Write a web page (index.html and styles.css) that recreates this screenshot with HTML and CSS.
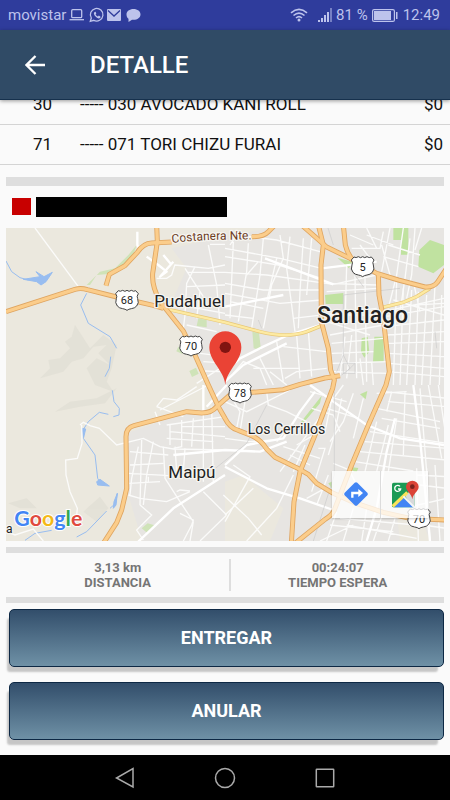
FILE: index.html
```html
<!DOCTYPE html>
<html lang="es">
<head>
<meta charset="utf-8">
<meta name="viewport" content="width=device-width, initial-scale=1">
<title>Detalle</title>
<link rel="stylesheet" href="styles.css">
</head>
<body>
<div class="status">
  <span class="status-name">movistar</span>
  <svg class="status-left" viewBox="0 0 72 16" width="72" height="16" aria-hidden="true">
    <g fill="none" stroke="currentColor" stroke-width="1.3">
      <rect x="2.7" y="2.7" width="10" height="8" rx="1"/>
      <path d="M0.5 12.7h14.5"/>
      <path d="M21.3 14.3l1-3.3a6.3 6.3 0 1 1 2.5 2.3z"/>
    </g>
    <path fill="currentColor" d="M25.300 5.200c.4-.6 1.200-.7 1.500 0l.5 1.200-.7 1c.5 1 1.300 1.700 2.300 2.200l.9-1 1.500.8c.4.3.2 1.200-.3 1.600-1.200 1-3.300 0-4.700-1.700-1.300-1.600-1.900-3-1-4.100z"/>
    <rect x="38" y="2" width="14" height="12" rx="1" fill="currentColor"/>
    <path d="M39 3.500l6 5.500 6-5.500" fill="none" stroke="#2f3c9c" stroke-width="1.300"/>
    <path fill="currentColor" d="M64.500 2c4 0 7 2.300 7 5.400s-3 5.400-7 5.400l-1.500-.1L59.500 15v-3.300c-1.300-1-2-2.500-2-4.300 0-3.100 3-5.400 7-5.400z"/>
  </svg>
  <span class="spacer"></span>
  <svg class="status-wifi" viewBox="0 0 18 14" width="18" height="14" aria-hidden="true">
    <g fill="none" stroke="currentColor" stroke-width="1.600">
      <path d="M1 4.800q8-7 16 0M3.500 7.500q5.500-4.800 11 0M6 10q3-2.600 6 0"/>
    </g>
    <circle cx="9" cy="12" r="1.500" fill="currentColor"/>
  </svg>
  <svg class="status-signal" viewBox="0 0 15 14" width="15" height="14" aria-hidden="true">
    <path fill="currentColor" d="M0 12h2v2H0zM3 10h2v4H3zM6 7h2v7H6zM9 4h2v10H9z"/>
    <path fill="currentColor" opacity=".5" d="M12 0h2v14h-2z"/>
  </svg>
  <span class="status-battery">81 %</span>
  <svg class="status-cell" viewBox="0 0 26 13" width="26" height="13" aria-hidden="true">
    <rect x=".6" y=".6" width="21.800" height="11.800" rx="1.500" fill="none" stroke="currentColor" stroke-width="1.200"/>
    <path fill="currentColor" d="M2 2h17v9H2zM24 3h1.500v7H24z"/>
  </svg>
  <span class="status-time">12:49</span>
</div>

<header class="bar">
  <button class="back" type="button" aria-label="Volver">
    <svg viewBox="0 0 20 20" width="20" height="20" aria-hidden="true"><path d="M20 10H1.800M10.500 1L1.500 10l9 9" fill="none" stroke="#fff" stroke-width="2.300"/></svg>
  </button>
  <h1 class="title">DETALLE</h1>
</header>

<main class="content">
  <table class="items">
    <tbody>
      <tr><td class="code">30</td><td>----- 030 AVOCADO KANI ROLL</td><td class="price">$0</td></tr>
      <tr><td class="code">71</td><td>----- 071 TORI CHIZU FURAI</td><td class="price">$0</td></tr>
    </tbody>
  </table>

  <div class="detail">
    <div class="rule rule-thick"></div>
    <div class="address"><span class="marker"></span><span class="redacted"></span></div>

    <div class="map">
      <svg class="map-canvas" viewBox="18 9 1314 939" role="img" aria-label="Mapa">
        <defs>
          <path id="costanera" d="M516 54Q600 44 675 44T770 42"/>
          <path id="shield" d="M-26-28q6 4 13-1 7 6 13 0 6 6 13 0 7 5 13 1l8 9q-6 8-2 15 5 13-3 22-6 7-16 8-8 1-13 5-5-4-13-5-10-1-16-8-8-9-3-22 4-7-2-15z"/>
          <path id="h1" d="M18 260L225 193Q243 188 262 194L350 216 460 241 490 250"/>
          <path id="h2" d="M470 0L472 50 458 145Q455 185 480 228L500 255 550 318 585 390 625 480 655 545 675 580Q690 610 715 616L750 630Q782 643 800 672L825 697 890 728 925 748 950 775 1000 805 1060 832 1150 862 1230 880 1340 885"/>
          <path id="h3" d="M318 182L328 148 375 122 412 82Q430 55 455 54L515 51"/>
          <path id="h4" d="M755 35Q790 36 805 20L825 0"/>
          <path id="h5" d="M310 955L350 893 365 855 380 790 378 635Q378 608 402 602L560 560 605 564Q635 564 650 545L690 510 755 502 850 494 900 478 975 459 1020 452"/>
          <path id="h6" d="M905 0L945 35 980 66 1050 100 1130 145 1195 165 1275 186Q1300 188 1312 172L1340 130"/>
          <path id="h7" d="M955 0L970 60 963 120 964 290 985 370 992 435 1003 465 998 490 945 630 900 740 882 830 874 955"/>
          <path id="h8" d="M1030 0L1036 60Q1044 92 1062 108M1135 145L1137 210 1150 280 1160 370 1168 440 1158 480 1105 600 1055 720 1005 850Q1000 868 975 883L885 955"/>
        </defs>

        <rect class="land" width="1340" height="960"/>
        <path class="city" d="M515 70L675 35 860 0H1340V960H430L385 810 380 625 540 570 640 550 590 385 505 255 560 130z"/>
        <path class="land" d="M675 770L730 750 850 850 810 948H675zM1190 865L1260 870 1290 948H1200z"/>
        <g class="relief">
          <path d="M225 300L215 335 195 350 210 370 180 400 145 405 150 430 120 460 190 440 215 410 250 400 280 365 320 360 295 385 330 420 290 400 260 430 285 480 340 500 320 470 335 430 350 360 310 330 270 370z"/>
          <path d="M165 560L210 530 290 520 350 490 315 535 240 545zM25 835L80 820 110 850 60 850zM250 860L300 815 325 850 290 890z"/>
        </g>
        <g class="park">
          <path d="M300 140L345 130 385 90 410 60 400 90 350 145 290 150 270 180 260 180zM595 280l25 5v22l-30-4zM568 438l20-10 8 18-20 10zM535 365l18 8-6 14-18-8zM425 910l18-15 20 6-22 22zM757 320l20 4 6 50-22-4z"/>
        </g>
        <g class="park-bright">
          <path d="M1180 9h45v80h-22V45h-23zM1258 75L1290 45 1332 60V120L1300 145 1255 125zM975 210l55-6v33h-53zM1123 335h28v75h-32zM1012 98l45 12-10 20zM1085 340l18-5 5 45-15 18-10-18zM900 595L965 512 960 535 905 600zM1080 508l22-10-5 25zM1045 725l30 4-5 12-25-4zM985 775l10-5v20z"/>
        </g>
        <g class="water">
          <path d="M18 108L35 140 60 158 85 165M260 205L242 240 265 295 330 335 350 370M332 395L328 430 315 455M337 496L342 530 358 550 357 570 340 575M325 568L298 562 265 590 249 615 250 640 285 690 293 760 300 772M352 805L347 835 330 850M320 858L260 920 230 936M75 946L105 925 155 916"/>
          <path class="water-fill" d="M70 163L120 155 108 140 132 155 157 142 138 170 123 180 110 170zM290 770l10-7 28 20-35-3zM352 805l-4 35-8 10 2-20zM247 610l10 2-6 25z"/>
        </g>

        <g class="street">
          <path d="M105 9L235 185M18 920L45 930 100 912 115 930 130 948M240 600L250 592 270 602 298 610 350 660 430 640 480 665 520 672 675 675M245 600L246 655 232 700 197 705 198 750 210 800 232 850 230 870"/>
          <path d="M525 118L515 150 500 160 470 160M525 120L625 130 675 120M585 125L560 175 555 270 550 310M625 60L650 180 660 300M675 58H630M565 142H675M560 185L675 180M540 240L675 265M600 200L590 280M600 385L680 395M610 410L690 415M615 438L660 440M590 475L660 430M640 350L670 355M560 300L650 320M555 130L610 215"/>
          <path d="M470 545L490 520 530 525 590 485M465 560L480 600M470 545L550 575M480 555L625 480M500 600L675 575M510 600V660M545 585V665L520 670M580 580L575 665M610 560V770M635 545L640 770M675 605H545M510 620L675 635M500 640L640 650M425 645L420 840M460 650L440 750 430 840M390 720L490 715M385 745L510 752M388 775L480 770M385 810L420 820 500 830 570 800M490 665L495 760 540 830 580 890 570 948M415 665L395 760 390 810M390 680L505 690M525 665L530 740M555 670L550 740M420 840L455 870 410 915 430 945M610 800L680 870M540 865L580 885 575 900 550 948M600 948L680 870M445 755V770M530 800L540 795 570 798"/>
          <path d="M675 70L840 100 965 130M690 60L710 30 830 45 960 80M675 95L835 120 965 160M675 142L800 150 1000 178 1130 150M675 175L790 195 960 195M675 205L840 235 965 225M700 50L690 280M745 55L740 140 715 290M790 40L780 150 755 310M840 30L850 100 815 180 790 310M870 35L860 130 875 240 885 320M910 40L900 200 895 310M935 40L920 210M675 270L760 280M775 110L740 150M880 280L1130 250M690 230L790 250M830 100L800 230"/>
          <path d="M980 175L1130 180M980 200L1130 190M965 270H1130M1040 120L1035 300M1065 150L1070 460M1095 160L1100 470M1170 9L1145 140M1210 9L1190 150 1165 250M1230 40L1215 160 1200 260M1245 9L1235 150 1220 220M1165 60L1260 90M1150 95L1255 125M1100 30L1180 60M1080 60L1110 100M1050 30L1120 60M1055 70L1140 70 1150 20M1265 9L1245 75M1145 60L1170 150M1100 9L1130 70"/>
          <path d="M1190 170L1180 480M1210 190L1200 480M1235 195L1220 480M1255 200L1245 480M1280 210L1265 480M1305 180L1290 480M1325 210L1318 480M1155 275L1332 245M1155 305L1332 285M1160 330L1332 320M1160 355L1332 350M1165 385L1332 395M1168 415L1332 430M1165 440L1332 455M1150 260L1332 220M1180 225L1332 270M1240 240L1332 235M1240 170L1260 260"/>
          <path d="M990 330L1150 300M995 355L1150 340M995 385L1120 380M995 415L1165 410M1000 440L1165 445M1035 335L1020 450M1055 330L1040 460M1080 400L1090 480M1115 410L1120 480M980 290L1110 330M830 350L850 470M890 330L900 460M925 315L935 455M850 365L980 380M810 440L860 480M780 400L820 480M760 430L900 430M700 445L730 410 780 430 800 480M855 460L890 440 980 430"/>
          <path d="M675 530L740 560 800 530 870 495M690 510L720 560 710 610M800 500L805 540 860 560 920 590M740 500L720 620M675 640L750 650 820 645M830 650L870 600M850 665L960 700M870 690L930 720M890 660L960 620M955 670L975 670 935 800M915 660L880 740M935 550L1000 570 1020 620M1000 500L975 620M1025 520L1000 640 985 690M1060 505L1030 590 990 650M1090 520L1060 640M930 500L1040 530M980 550L1075 580"/>
          <path d="M1130 550L1320 590M1145 580L1320 610M1155 500L1340 520M1165 530L1340 545M1130 505L1220 500M1110 620L1340 655M1095 650L1340 670M1080 680L1340 705M1065 710L1240 738M1130 590L1095 740M1165 600L1130 740M1190 580L1165 740M1150 500L1120 580M1175 500L1160 560M1215 500L1210 690M1285 480L1325 700M1315 480L1340 650M1260 490L1280 740M1000 715L1060 740M1210 850L1340 820M1250 730L1255 948M1280 730L1290 948M1305 720L1320 948M1250 750L1340 755M1260 780L1340 790M1270 900L1340 910M1050 740L1090 820M1150 860L1120 948M1185 880L1165 948M1100 850L1085 948M1060 850L1030 948M1040 900L1250 940M990 900L1180 920M1020 880L1250 900M960 948L1060 900"/>
          <path d="M675 870L760 790M840 740L1030 480M700 720L750 755 675 890M880 750L830 850 740 948M1010 860L980 948M975 790L920 820M985 750L950 840M670 810L745 880 785 930"/>
        </g>
        <g class="avenue">
          <path d="M412 20V60L420 80M440 95L475 120 500 140 480 155 520 110M490 90L515 120M675 440L720 400 790 365 865 330 960 300M675 470L730 420 860 355M620 545L680 480M610 480V560M415 950L520 850 675 750M520 690L675 675M675 720L740 660 850 640 900 560 945 500M675 675L780 680 860 650M675 725L800 790 900 820 1000 855M930 480L1000 530 1100 600 1200 640 1332 660M1240 480L1260 640 1290 948M1185 580L1160 680 1130 850 1100 948M965 130L1130 110M795 100L1000 178M675 245L850 210"/>
        </g>
        <g class="rail">
          <path d="M1030 210V390L1010 440M1030 210L1200 190M1025 450L1050 430 1030 390M1003 500V750L940 948M640 735L740 655 800 540M984 9L1000 60M1050 130L1090 185M1305 320L1310 370M775 285L785 310M1030 415h35v30h-35zM1035 445L1065 415"/>
        </g>

        <path class="trunk-case" d="M490 250L675 292 780 320Q860 340 920 320L970 300M1145 248L1210 232 1250 215 1290 190"/>
        <path class="trunk" d="M490 250L675 292 780 320Q860 340 920 320L970 300M1145 248L1210 232 1250 215 1290 190"/>
        <g class="highway-case"><use href="#h1"/><use href="#h2"/><use href="#h3"/><use href="#h4"/><use href="#h5"/><use href="#h6"/><use href="#h7"/><use href="#h8"/></g>
        <g class="highway"><use href="#h1"/><use href="#h2"/><use href="#h3"/><use href="#h4"/><use href="#h5"/><use href="#h6"/><use href="#h7"/><use href="#h8"/></g>

        <g class="shield">
          <use href="#shield" x="381" y="225"/><use href="#shield" x="573" y="362"/><use href="#shield" x="1088" y="124"/><use href="#shield" x="720" y="503"/><use href="#shield" x="1257" y="880"/>
        </g>
        <g class="shield-label">
          <text x="381" y="238">68</text><text x="573" y="375">70</text><text x="1088" y="137">5</text><text x="720" y="516">78</text><text x="1257" y="893">70</text>
        </g>
        <g class="place">
          <text class="place-road"><textPath href="#costanera">Costanera Nte.</textPath></text>
          <text class="place-town" x="463" y="245">Pudahuel</text>
          <text class="place-town" x="505" y="760">Maipú</text>
          <text class="place-suburb" x="743" y="627">Los Cerrillos</text>
          <text class="place-city" x="951" y="294">Santiago</text>
          <text class="place-road" x="18" y="925">a</text>
        </g>
        <path fill="#ea4335" d="M676 480C672 435 628 410 628 367a48 48 0 0 1 96 0C724 410 680 435 676 480z"/>
        <circle cx="676" cy="367" r="17" fill="#811411"/>
        <text class="logo" x="43" y="902"><tspan class="blue">G</tspan><tspan class="red">o</tspan><tspan class="yellow">o</tspan><tspan class="blue">g</tspan><tspan class="green">l</tspan><tspan class="red">e</tspan></text>
      </svg>
      <div class="map-tools">
        <button type="button" class="tool" aria-label="Cómo llegar">
          <svg viewBox="0 0 72 72" width="24" height="24" aria-hidden="true"><path fill="#4285f4" d="M32 2q4-3 8 0l30 30q3 4 0 8L40 70q-4 3-8 0L2 40q-3-4 0-8z"/><path d="M25 47V33h24" fill="none" stroke="#fff" stroke-width="7"/><path fill="#fff" d="M43 21l14 12-14 12z"/></svg>
        </button>
        <button type="button" class="tool" aria-label="Abrir en Google Maps">
          <svg viewBox="0 0 84 84" width="28" height="28" aria-hidden="true">
            <rect x="3" y="8" width="67" height="74" rx="5" fill="#1c9a55"/>
            <path fill="#d7d9db" d="M40 44L70 28V78L64 82z"/>
            <path fill="#4285f4" d="M8 82L38 50 68 82z"/>
            <path d="M5 79L49 37" stroke="#fbe35a" stroke-width="10"/>
            <path d="M37 49L69 81" stroke="#f5f5f5" stroke-width="6"/>
            <path d="M27 19a9 9 0 1 0 2 8h-8" fill="none" stroke="#fff" stroke-width="4"/>
            <path fill="#db4437" d="M64 58C62 40 45 34 45 20a19 18 0 0 1 38 0C83 34 66 40 64 58z"/>
            <circle cx="64" cy="20" r="7" fill="#7b231e"/>
          </svg>
        </button>
      </div>
    </div>

    <div class="rule"></div>
    <dl class="stats">
      <div class="stat"><dd>3,13 km</dd><dt>DISTANCIA</dt></div>
      <div class="stat"><dd>00:24:07</dd><dt>TIEMPO ESPERA</dt></div>
    </dl>
    <div class="rule"></div>

    <div class="actions">
      <button type="button" class="action">ENTREGAR</button>
      <button type="button" class="action">ANULAR</button>
    </div>
  </div>
</main>

<nav class="nav">
  <button type="button" class="nav-key" aria-label="Atrás"><svg viewBox="0 0 24 24" width="24" height="24" aria-hidden="true"><path d="M20 2.500v18.500L3.500 12z"/></svg></button>
  <button type="button" class="nav-key" aria-label="Inicio"><svg viewBox="0 0 24 24" width="24" height="24" aria-hidden="true"><circle cx="12" cy="12" r="9.500"/></svg></button>
  <button type="button" class="nav-key" aria-label="Recientes"><svg viewBox="0 0 24 24" width="24" height="24" aria-hidden="true"><rect x="3.300" y="3.300" width="17.400" height="17.400" rx=".5"/></svg></button>
</nav>
</body>
</html>
```
FILE: styles.css
```css
* { box-sizing: border-box; }

body {
  margin: 0;
  min-height: 100vh;
  display: flex;
  flex-direction: column;
  background: #fafafa;
  color: #111;
  font-family: Roboto, "Liberation Sans", sans-serif;
}

button {
  font: inherit;
  border: 0;
  padding: 0;
  background: none;
}

svg { display: block; }

.status {
  position: relative;
  z-index: 2;
  display: flex;
  align-items: center;
  height: 30px;
  padding: 0 10px 0 8px;
  background: #2f3c9c;
  color: #bdc3ec;
  font-size: 15px;
}
.status-left { margin-left: 3px; }
.spacer { flex: 1; }
.status-wifi { margin-right: 10px; }
.status-signal { margin-right: 3px; }
.status-battery { margin-right: 4px; }
.status-cell { margin-right: 5px; }

.bar {
  position: relative;
  z-index: 2;
  display: flex;
  align-items: center;
  gap: 45px;
  height: 70px;
  padding: 0 25px;
  background: #304b66;
  border-bottom: 1px solid #16314d;
  box-shadow: 0 1px 4px rgba(0, 0, 0, .4);
}
.title {
  margin: 0;
  color: #fff;
  font-size: 24px;
  font-weight: 500;
}

.content { flex: 1; }

.items {
  width: 100%;
  margin-top: -16px;
  border-collapse: collapse;
  font-size: 17px;
}
.items td {
  height: 40px;
  padding: 0;
  border-bottom: 1px solid #d4d4d4;
}
.items .code { width: 80px; padding-left: 33px; }
.items .price { padding-right: 7px; text-align: right; }

.detail { padding: 12px 6px 15px; }

.rule { height: 6px; background: #dedede; }
.rule-thick { height: 9px; }

.address {
  display: flex;
  align-items: center;
  gap: 5px;
  padding: 11px 6px;
}
.marker { width: 19px; height: 17px; background: #c80000; }
.redacted { width: 191px; height: 20px; background: #000; }

.map { position: relative; margin-bottom: 6px; }
.map-canvas { width: 100%; height: auto; }
.map-tools {
  position: absolute;
  right: 16px;
  bottom: 23px;
  display: flex;
  background: rgba(255, 255, 255, .76);
  box-shadow: 0 1px 2px rgba(0, 0, 0, .2);
}
.tool {
  display: grid;
  place-items: center;
  width: 48px;
  height: 47px;
}
.tool + .tool { border-left: 1px solid #dcdcdc; }

.land { fill: #ebe8de; }
.city { fill: #e7e5e2; }
.relief { fill: #dfddd3; opacity: .6; }
.park { fill: #cfe3b8; }
.park-bright { fill: #c0e2a0; }
.water { fill: none; stroke: #98bdf0; stroke-width: 3; }
.water-fill { fill: #98bdf0; }
.street { fill: none; stroke: #fbfbfa; stroke-width: 4; }
.avenue { fill: none; stroke: #fff; stroke-width: 7; stroke-linejoin: round; }
.rail { fill: none; stroke: #cbcbcb; stroke-width: 2; }
.trunk-case { fill: none; stroke: #e7c777; stroke-width: 11; }
.trunk { fill: none; stroke: #fdeaa2; stroke-width: 7; }
.highway-case { fill: none; stroke: #dfa561; stroke-width: 15; stroke-linejoin: round; }
.highway { fill: none; stroke: #fbcd8b; stroke-width: 10; stroke-linejoin: round; }

.shield { fill: #fff; stroke: #444; stroke-width: 3; }
.shield-label { fill: #222; font-size: 33px; text-anchor: middle; }
.place {
  fill: #222;
  stroke: #f5f4f0;
  stroke-width: 8;
  stroke-linejoin: round;
  paint-order: stroke;
}
.place-city { font-size: 69px; font-weight: 500; }
.place-town { font-size: 51px; }
.place-suburb { font-size: 42px; }
.place-road { font-size: 36px; }
textPath { fill: #6b3a1c; }

.logo {
  font-family: Lato, Roboto, sans-serif;
  font-size: 64px;
  font-weight: 700;
  stroke: #fff;
  stroke-width: 6;
  paint-order: stroke;
}
.blue { fill: #4285f4; }
.red { fill: #e04a3f; }
.yellow { fill: #f4b919; }
.green { fill: #34a853; }

.stats {
  display: grid;
  grid-template-columns: 51fr 49fr;
  margin: 0;
  padding: 6px 0;
  color: #757575;
  font-size: 13px;
  font-weight: 700;
  line-height: 15px;
  text-align: center;
}
.stat { padding: 1px 0; }
.stat + .stat { border-left: 2px solid #dedede; }
.stat dd { margin: 0; }

.actions {
  display: flex;
  flex-direction: column;
  gap: 15px;
  padding: 6px 0 0 3px;
}
.action {
  height: 58px;
  border: 1px solid #0d2844;
  border-radius: 5px;
  background: linear-gradient(#324e6b, #6f91a6);
  box-shadow: -4px 7px 2px -2px #c6c6c6;
  color: #fff;
  font-size: 18px;
  font-weight: 700;
}

.nav {
  display: flex;
  justify-content: center;
  gap: 76px;
  height: 45px;
  background: #000;
}
.nav-key { display: grid; place-items: center; width: 24px; }
.nav-key svg { fill: none; stroke: #aaa; stroke-width: 1.500; }
```
